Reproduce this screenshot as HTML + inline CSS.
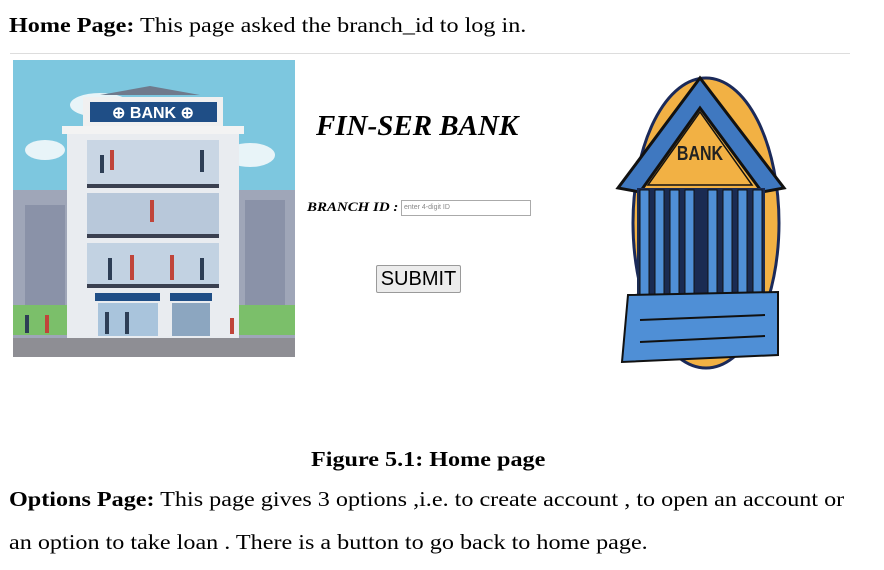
<!DOCTYPE html>
<html><head><meta charset="utf-8"><style>
body{margin:0;width:884px;height:570px;background:#fff;position:relative;overflow:hidden;font-family:"Liberation Serif",serif;color:#000}
.a{position:absolute;white-space:nowrap}
.s{transform:scaleX(1.15);transform-origin:0 0}
</style></head><body>
<div class="a s" style="left:9px;top:13px;font-size:21px"><b>Home Page:</b> This page asked the branch_id to log in.</div>
<div class="a" style="left:10px;top:53px;width:840px;height:1px;background:#ddd"></div>

<svg class="a" style="left:13px;top:60px" width="282" height="297" viewBox="13 60 282 297">
<rect x="13" y="60" width="282" height="297" fill="#7dc7df"/>
<ellipse cx="100" cy="105" rx="30" ry="12" fill="#e8f4f8"/>
<ellipse cx="250" cy="155" rx="25" ry="12" fill="#e8f4f8"/>
<ellipse cx="45" cy="150" rx="20" ry="10" fill="#e8f4f8"/>
<rect x="13" y="190" width="282" height="150" fill="#9fa6b8"/>
<rect x="25" y="205" width="40" height="120" fill="#8a92a8"/>
<rect x="245" y="200" width="40" height="125" fill="#8a92a8"/>
<rect x="13" y="305" width="282" height="30" fill="#7bbf6a"/>
<polygon points="100,95 150,86 200,95" fill="#6f7a8c"/>
<rect x="83" y="97" width="140" height="30" fill="#f0f0f0"/>
<rect x="90" y="102" width="127" height="20" fill="#1f4e86"/>
<text x="153" y="118" font-family="Liberation Sans" font-weight="bold" font-size="16" fill="#fff" text-anchor="middle">⊕ BANK ⊕</text>
<rect x="62" y="126" width="182" height="8" fill="#f3f3f3"/>
<rect x="67" y="134" width="172" height="205" fill="#e9ecf0"/>
<rect x="87" y="140" width="132" height="45" fill="#c9d6e4"/>
<rect x="87" y="184" width="132" height="4" fill="#3a4050"/>
<rect x="87" y="193" width="132" height="42" fill="#b8c8da"/>
<rect x="87" y="234" width="132" height="4" fill="#3a4050"/>
<rect x="87" y="243" width="132" height="42" fill="#c2d2e2"/>
<rect x="87" y="284" width="132" height="4" fill="#3a4050"/>
<rect x="95" y="293" width="65" height="8" fill="#1f4e86"/>
<rect x="170" y="293" width="42" height="8" fill="#1f4e86"/>
<rect x="98" y="303" width="60" height="33" fill="#a9c4dc"/>
<rect x="172" y="303" width="38" height="33" fill="#8ca6c0"/>
<g fill="#c0453a"><rect x="110" y="150" width="4" height="20"/><rect x="150" y="200" width="4" height="22"/><rect x="130" y="255" width="4" height="25"/><rect x="170" y="255" width="4" height="25"/><rect x="45" y="315" width="4" height="18"/><rect x="230" y="318" width="4" height="16"/></g>
<g fill="#2d3e55"><rect x="100" y="155" width="4" height="18"/><rect x="200" y="150" width="4" height="22"/><rect x="108" y="258" width="4" height="22"/><rect x="200" y="258" width="4" height="22"/><rect x="105" y="312" width="4" height="22"/><rect x="125" y="312" width="4" height="22"/><rect x="25" y="315" width="4" height="18"/></g>
<rect x="13" y="338" width="282" height="19" fill="#8e8e94"/>
</svg>

<div class="a" style="left:316px;top:110px;font-size:29px;font-weight:bold;font-style:italic">FIN-SER BANK</div>
<div class="a s" style="left:307px;top:199px;font-size:13px;font-weight:bold;font-style:italic">BRANCH ID :</div>
<div class="a" style="left:401px;top:200px;width:130px;height:16px;border:1px solid #aaa;font:7px 'Liberation Sans',sans-serif;color:#888;line-height:14px;padding-left:2px;box-sizing:border-box">enter 4-digit ID</div>
<div class="a" style="left:376px;top:265px;width:85px;height:28px;border:1px solid #9a9a9a;border-radius:2px;background:#ececec;box-sizing:border-box;font:20px 'Liberation Sans',sans-serif;text-align:center;line-height:26px">SUBMIT</div>

<svg class="a" style="left:615px;top:70px" width="172" height="305" viewBox="615 70 172 305">
<ellipse cx="706" cy="223" rx="73" ry="145" fill="#f2b144" stroke="#1b2a5a" stroke-width="3"/>
<polygon points="700,78 618,188 640,192 700,108 762,192 784,188" fill="#3f78c0" stroke="#111" stroke-width="3"/>
<polygon points="700,112 648,185 752,185" fill="#f2b144" stroke="#111" stroke-width="1.5"/>
<text x="700" y="160" font-family="Liberation Sans" font-weight="bold" font-size="20" fill="#222" text-anchor="middle" transform="translate(700,0) scale(0.8,1) translate(-700,0)">BANK</text>
<rect x="637" y="188" width="128" height="110" fill="#1a2b52"/>
<g fill="#4f8fd6" stroke="#111" stroke-width="1">
<rect x="640" y="190" width="9" height="108"/><rect x="655" y="190" width="9" height="108"/><rect x="670" y="190" width="9" height="108"/><rect x="685" y="190" width="9" height="108"/>
<rect x="708" y="190" width="9" height="108"/><rect x="723" y="190" width="9" height="108"/><rect x="738" y="190" width="9" height="108"/><rect x="753" y="190" width="9" height="108"/>
</g>
<polygon points="628,295 778,292 778,355 622,362" fill="#4f8fd6" stroke="#111" stroke-width="2"/>
<path d="M640 320 L765 315 M640 342 L765 336" stroke="#111" stroke-width="2"/>
</svg>

<div class="a s" style="left:311px;top:447px;font-size:21px;font-weight:bold">Figure 5.1: Home page</div>
<div class="a s" style="left:9px;top:487px;font-size:21px"><b>Options Page:</b> This page gives 3 options ,i.e. to create account , to open an account or</div>
<div class="a s" style="left:9px;top:530px;font-size:21px">an option to take loan . There is a button to go back to home page.</div>
</body></html>
